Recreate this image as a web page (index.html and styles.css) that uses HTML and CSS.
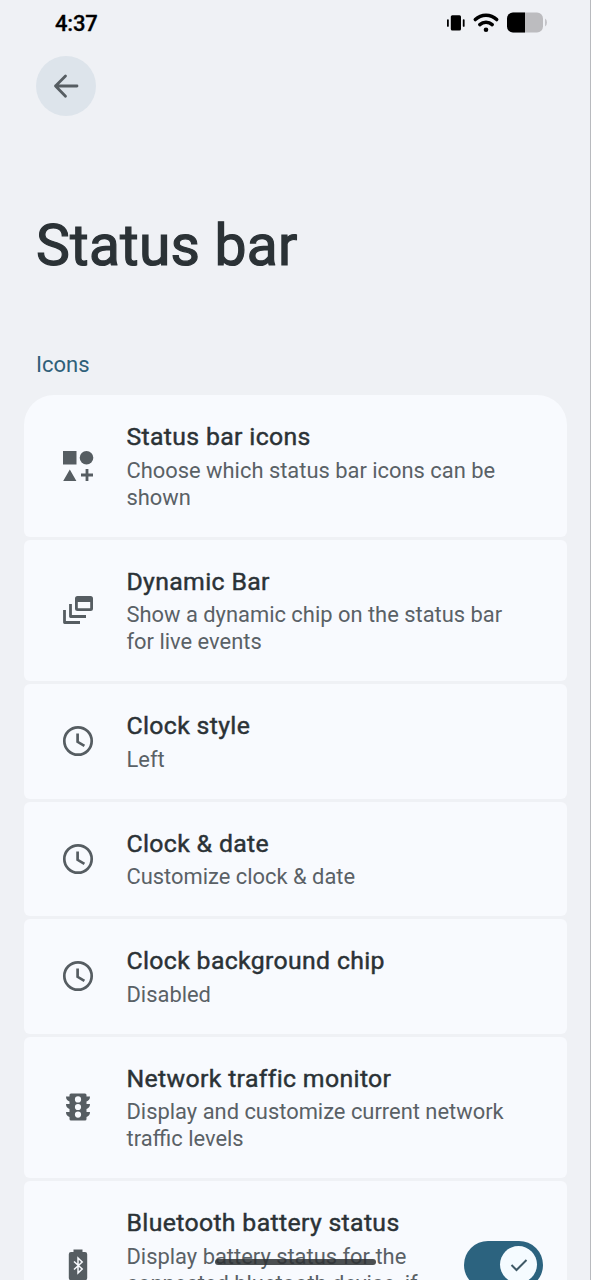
FILE: index.html
```html
<!DOCTYPE html>
<html lang="en">
<head>
<meta charset="utf-8">
<title>Status bar</title>
<link rel="stylesheet" href="styles.css">
</head>
<body>
<div class="screen">
  <div class="statusbar">
    <span class="time">4:37</span>
    <svg class="sys" width="102" height="24" viewBox="0 0 102 24">
      <rect x="5.800" y="4.200" width="10.200" height="15.200" rx="1.500"/>
      <rect x="2" y="8.200" width="1.800" height="7.600" rx=".9"/>
      <rect x="17.800" y="8.200" width="1.800" height="7.600" rx=".9"/>
      <path d="M30.300 8.600a15.500 15.500 0 0 1 21.400 0M34.800 13.600a9.300 9.300 0 0 1 12.400 0" fill="none" stroke="#000" stroke-width="3.500" stroke-linecap="round"/>
      <circle cx="41" cy="18.700" r="2.300"/>
      <rect x="62" y="1.500" width="36" height="20" rx="6" fill="#bcbcbf"/>
      <path d="M80 1.500v20H68a6 6 0 0 1-6-6v-8a6 6 0 0 1 6-6z"/>
      <path d="M100 7.500q2 1 2 4t-2 4z" fill="#c4c4c8"/>
    </svg>
  </div>
  <button class="back" aria-label="Back">
    <svg width="30" height="30" viewBox="0 0 30 30"><path d="M26 15H4.500M14.500 5L4.500 15l10 10.200" fill="none" stroke="#565d62" stroke-width="2.800" stroke-linecap="round" stroke-linejoin="round"/></svg>
  </button>
  <h1>Status bar</h1>
  <h2>Icons</h2>
  <ul class="list">
    <li class="card">
      <svg class="icon" viewBox="0 0 32 32"><path d="M1 1h13.500v13.500H1zM1.200 31L7.800 19.500 14.400 31zM23.600 19h2.800v4.600H31v2.800h-4.600V31h-2.800v-4.600H19v-2.800h4.600z"/><circle cx="24.500" cy="7.700" r="6.800"/></svg>
      <div class="text"><h3>Status bar icons</h3><p>Choose which status bar icons can be<br>shown</p></div>
    </li>
    <li class="card">
      <svg class="icon" viewBox="0 0 32 32"><path fill-rule="evenodd" d="M15.500 2h13a2.500 2.500 0 0 1 2.500 2.500v10a2.500 2.500 0 0 1-2.500 2.500h-13a2.500 2.500 0 0 1-2.500-2.500v-10a2.500 2.500 0 0 1 2.500-2.500zM15.800 8v6.200h12.400V8z"/><path d="M8.500 10v12.500H24M2.500 16v12.500H18" fill="none" stroke="#565d62" stroke-width="2.800" stroke-linejoin="round"/></svg>
      <div class="text"><h3>Dynamic Bar</h3><p>Show a dynamic chip on the status bar<br>for live events</p></div>
    </li>
    <li class="card">
      <svg class="icon clock" viewBox="0 0 32 32"><circle cx="16" cy="16" r="13.700"/><path d="M15.600 8.500v8.300l6.800 4"/></svg>
      <div class="text"><h3>Clock style</h3><p>Left</p></div>
    </li>
    <li class="card">
      <svg class="icon clock" viewBox="0 0 32 32"><circle cx="16" cy="16" r="13.700"/><path d="M15.600 8.500v8.300l6.800 4"/></svg>
      <div class="text"><h3>Clock &amp; date</h3><p>Customize clock &amp; date</p></div>
    </li>
    <li class="card">
      <svg class="icon clock" viewBox="0 0 32 32"><circle cx="16" cy="16" r="13.700"/><path d="M15.600 8.500v8.300l6.800 4"/></svg>
      <div class="text"><h3>Clock background chip</h3><p>Disabled</p></div>
    </li>
    <li class="card">
      <svg class="icon" viewBox="0 0 32 32"><path fill-rule="evenodd" d="M9 2.500h14a1.500 1.500 0 0 1 1.500 1.500v1.500H28c0 2.800-1.400 4.400-3.500 5v2.500H28c0 2.800-1.400 4.400-3.500 5v3H28c0 2.800-1.400 4.400-3.500 5v2a1.500 1.500 0 0 1-1.500 1.500H9a1.500 1.500 0 0 1-1.500-1.500v-2c-2.100-.6-3.500-2.200-3.500-5h3.500v-3c-2.100-.6-3.500-2.200-3.500-5h3.500v-2.500c-2.100-.6-3.500-2.200-3.500-5h3.500V4A1.500 1.500 0 0 1 9 2.500zM16 5.300a3.100 3.100 0 1 0 0 6.200a3.100 3.100 0 1 0 0-6.200zM16 12.900a3.100 3.100 0 1 0 0 6.200a3.100 3.100 0 1 0 0-6.200zM16 20.500a3.100 3.100 0 1 0 0 6.200a3.100 3.100 0 1 0 0-6.200z"/></svg>
      <div class="text"><h3>Network traffic monitor</h3><p>Display and customize current network<br>traffic levels</p></div>
    </li>
    <li class="card tall">
      <svg class="icon" viewBox="0 0 32 32"><path d="M11.500 3v-2.500h9V3H23a2.200 2.200 0 0 1 2.200 2.200V29A2.200 2.200 0 0 1 23 31.200H9A2.200 2.200 0 0 1 6.800 29V5.200A2.200 2.200 0 0 1 9 3z"/><path d="M12 12.500l8.200 7.500-4.200 4V9l4.200 4-8.200 7.500" fill="none" stroke="#f8fafe" stroke-width="1.500"/></svg>
      <div class="text"><h3>Bluetooth battery status</h3><p>Display battery status for the<br>connected bluetooth device, if</p></div>
      <span class="toggle"><span class="thumb"><svg width="20" height="16" viewBox="0 0 20 16"><path d="M2.500 8l5 5L17.500 3" fill="none" stroke="#3f5966" stroke-width="2"/></svg></span></span>
    </li>
  </ul>
  <div class="homebar"></div>
</div>
</body>
</html>
```
FILE: styles.css
```css
* { box-sizing: border-box; margin: 0; padding: 0; }
html, body { height: 100%; overflow: hidden; background: #eff1f5; }
.screen {
  position: relative;
  width: 591px;
  height: 1280px;
  overflow: hidden;
  border-right: 1px solid #b8babe;
  background: #eff1f5;
  font-family: Roboto, "Noto Sans", sans-serif;
  color: #2b3236;
}
.statusbar {
  display: flex;
  justify-content: space-between;
  align-items: center;
  height: 46px;
  padding: 0 43px 0 55px;
}
.time { font-size: 22px; font-weight: 500; letter-spacing: -0.2px; color: #000; -webkit-text-stroke: 0.3px #000; }
.back {
  display: flex;
  align-items: center;
  justify-content: center;
  width: 60px;
  height: 60px;
  margin: 10px 0 0 36px;
  border: 0;
  border-radius: 50%;
  background: #dde4eb;
}
h1 { margin: 94px 0 0 36px; font-size: 57px; line-height: 72px; font-weight: 400; letter-spacing: 0.2px; -webkit-text-stroke: 1.200px #2b3236; }
h2 { margin: 68px 0 0 36px; font-size: 22px; line-height: 30px; font-weight: 400; color: #2f6079; }
.list { display: flex; flex-direction: column; gap: 3px; margin: 15.200px 23px 0 24px; list-style: none; }
.card {
  display: flex;
  align-items: center;
  flex-shrink: 0;
  padding: 26px 24px 26px 38px;
  border-radius: 6px;
  background: #f8fafe;
}
.card:first-child { border-radius: 30px 30px 6px 6px; }
.tall { height: 168.500px; align-items: flex-start; }
.tall .icon { margin-top: 42px; }
.icon { flex: none; width: 32px; height: 32px; margin-right: 32.500px; fill: #565d62; }
.clock { fill: none; stroke: #565d62; stroke-width: 2.700; }
.text { flex: 1; white-space: nowrap; }
h3 { margin-bottom: 4.500px; font-size: 24.800px; line-height: 31px; font-weight: 400; letter-spacing: 0.35px; -webkit-text-stroke: 0.45px #2b3236; }
p { font-size: 21.900px; line-height: 27px; color: #5a6166; }
.toggle {
  display: flex;
  align-items: center;
  justify-content: flex-end;
  width: 79px;
  height: 48px;
  margin-top: 33.500px;
  padding-right: 6px;
  border-radius: 24px;
  background: #2c637f;
}
.thumb { display: flex; align-items: center; justify-content: center; width: 37px; height: 37px; border-radius: 50%; background: #f5fbff; }
.homebar {
  position: absolute;
  left: 215px;
  top: 1259px;
  width: 161px;
  height: 6px;
  border-radius: 3px;
  background: rgba(45, 48, 51, 0.85);
}
```
